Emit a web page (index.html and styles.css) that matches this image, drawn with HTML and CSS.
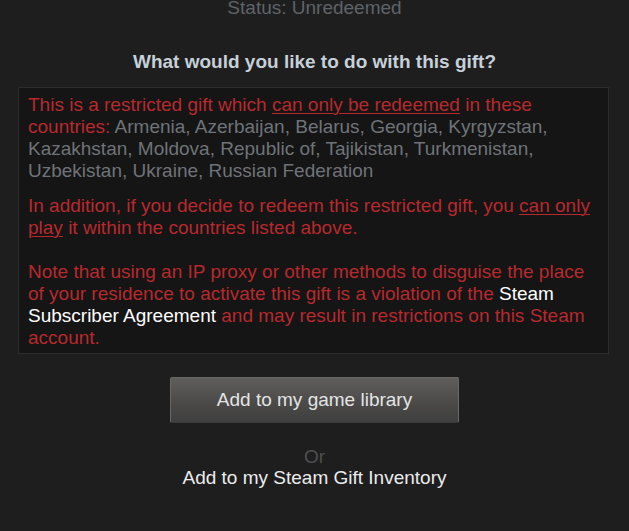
FILE: index.html
```html
<!DOCTYPE html>
<html lang="en">
	<head>
		<meta charset="UTF-8" />
		<meta name="viewport" content="width=device-width, initial-scale=1.0" />
		<title>Gift</title>
		<link rel="stylesheet" href="styles.css">
	</head>

	<body>
		<div class="giftPage">
			<div class="giftStatus">Status: Unredeemed</div>

			<div class="giftQuestion">What would you like to do with this gift?</div>

			<!-- Restriction notice -->
			<div class="restrictBox">
				<p class="restrictPara">
					This is a restricted gift which <u>can only be redeemed</u> in these countries:
					<span class="countryList">Armenia, Azerbaijan, Belarus, Georgia, Kyrgyzstan, Kazakhstan, Moldova, Republic of, Tajikistan, Turkmenistan, Uzbekistan, Ukraine, Russian Federation</span>
				</p>
				<p class="restrictPara middle">
					In addition, if you decide to redeem this restricted gift, you <u>can only play</u> it within the countries listed above.
				</p>
				<p class="restrictPara">
					Note that using an IP proxy or other methods to disguise the place of your residence to activate this gift is a violation of the <a class="ssaLink" href="#">Steam Subscriber Agreement</a> and may result in restrictions on this Steam account.
				</p>
			</div>

			<a class="libraryButton" href="#">Add to my game library</a>

			<div class="orText">Or</div>
			<a class="inventoryLink" href="#">Add to my Steam Gift Inventory</a>
		</div>
	</body>
</html>
```

FILE: styles.css
```css
body {
	margin: 0;
	background-color: #1e1e1e;
	font-family: "Liberation Sans", Arial, sans-serif;
	font-size: 19px;
	height: 531px;
	overflow: hidden;
}

.giftPage {
	display: flex;
	flex-direction: column;
	align-items: center;
}

.giftStatus {
	margin-top: -3px;
	line-height: 22px;
	color: #5f6368;
}

.giftQuestion {
	margin-top: 32px;
	font-weight: bold;
	line-height: 22px;
	color: #c6d0d8;
}

.restrictBox {
	box-sizing: border-box;
	width: 591px;
	margin: 14px 0 0 18px;
	padding: 6px 16px 4px 9px;
	background-color: #151515;
	border: 1px solid #2c2c2c;
	align-self: flex-start;
}

.restrictPara {
	margin: 0;
	line-height: 22px;
	color: #b8292e;
}

.restrictPara.middle {
	margin: 13px 0 22px 0;
}

.restrictPara u {
	text-decoration-thickness: 1px;
	text-underline-offset: 2px;
}

.countryList {
	color: #6f7378;
}

.ssaLink {
	color: #ffffff;
	text-decoration: none;
}

.libraryButton {
	display: flex;
	justify-content: center;
	align-items: center;
	box-sizing: border-box;
	width: 289px;
	height: 46px;
	margin-top: 23px;
	border: 1px solid #686866;
	border-bottom-color: #3a3a3a;
	border-radius: 2px;
	background: linear-gradient(to bottom, #5f5e5c 0%, #4a4948 60%, #3f3f3f 100%);
	color: #e4e4e4;
	text-decoration: none;
}

.orText {
	margin-top: 23px;
	line-height: 22px;
	color: #4f4f4f;
}

.inventoryLink {
	margin-top: -1px;
	line-height: 22px;
	color: #ececec;
	text-decoration: none;
}
```
